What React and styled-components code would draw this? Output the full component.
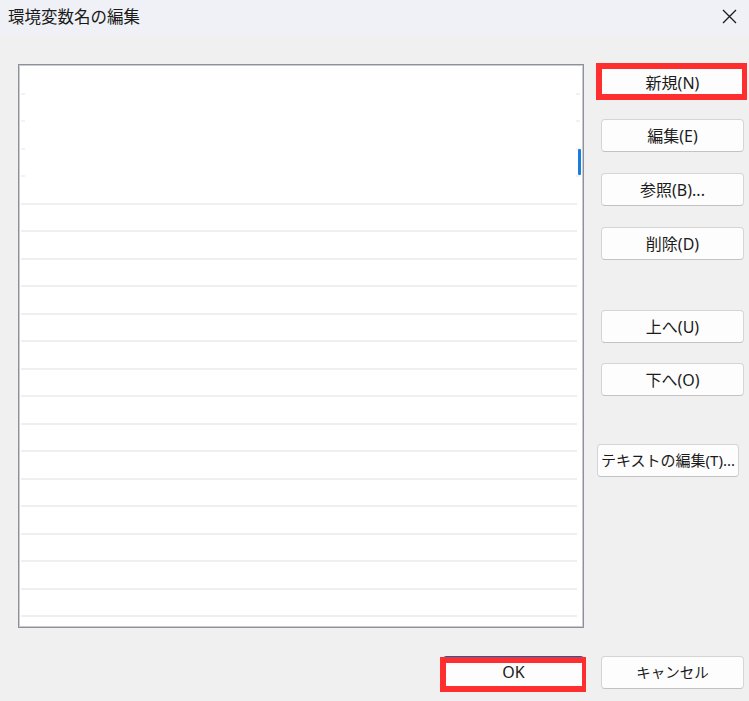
import React from "react";
import styled, { createGlobalStyle } from "styled-components";

const GlobalStyle = createGlobalStyle`
  html, body {
    margin: 0;
    padding: 0;
    background: #f0f0f0;
  }
  body {
    font-family: "Noto Sans", "Noto Sans CJK JP", sans-serif;
    color: #1b1b1b;
  }
`;

const Window = styled.div`
  width: 749px;
  height: 701px;
  display: flex;
  flex-direction: column;
  background: #f0f0f0;
  overflow: hidden;
`;

const TitleBar = styled.div`
  height: 35px;
  flex-shrink: 0;
  display: flex;
  align-items: center;
  justify-content: space-between;
  padding: 0 12px 4px 8px;
  box-sizing: border-box;
  background: #eff1f6;
  font-size: 16.5px;
  color: #1a1a1a;
`;

const CloseButton = styled.div`
  width: 16px;
  height: 16px;
  display: flex;
  align-items: center;
  justify-content: center;
  margin-top: 2px;
`;

const Main = styled.div`
  display: flex;
  gap: 17px;
  padding: 29px 0 0 18px;
`;

const ListBox = styled.div`
  position: relative;
  width: 566px;
  height: 564px;
  box-sizing: border-box;
  border: 1px solid #8d9199;
  box-shadow: inset 0 0 0 1px #c9cbd0;
  background: #ffffff;
  padding: 2px 2px 0 2px;
`;

const Row = styled.div`
  height: 27.5px;
  box-sizing: border-box;
  background-image: ${(p) =>
    p.$faint
      ? "linear-gradient(#f2f2f2, #f2f2f2), linear-gradient(#f2f2f2, #f2f2f2)"
      : "linear-gradient(#efefef, #efefef)"};
  background-repeat: no-repeat;
  background-size: ${(p) => (p.$faint ? "4px 2px, 4px 2px" : "calc(100% - 4px) 2px")};
  background-position: ${(p) =>
    p.$faint ? "left bottom, right 1px bottom" : "left bottom"};
`;

const ScrollThumb = styled.div`
  position: absolute;
  right: 2px;
  top: 84px;
  width: 3px;
  height: 26px;
  border-radius: 1px;
  background: #1a7be0;
`;

const ButtonColumn = styled.div`
  display: flex;
  flex-direction: column;
  padding-top: 2px;
`;

const Button = styled.button`
  position: relative;
  width: ${(p) => p.$width || 143}px;
  height: 33px;
  box-sizing: border-box;
  margin-top: ${(p) => p.$gap || 0}px;
  margin-left: ${(p) => p.$shift || 0}px;
  padding: 0 0 2px;
  border: 1px solid ${(p) => (p.$default ? "#0067c0" : "#d5d5d5")};
  border-bottom-color: ${(p) => (p.$default ? "#0067c0" : "#c2c2c2")};
  border-radius: 4px;
  background: #fdfdfd;
  font-family: "Noto Sans", "Noto Sans CJK JP", sans-serif;
  font-size: ${(p) => p.$size || 16}px;
  color: #1b1b1b;
  white-space: nowrap;
  cursor: default;

  ${(p) =>
    p.$mark &&
    `
    &::after {
      content: "";
      position: absolute;
      top: ${p.$mark.top}px;
      left: ${p.$mark.left}px;
      right: ${p.$mark.right}px;
      bottom: ${p.$mark.bottom}px;
      border-style: solid;
      border-color: #ff2f2f;
      border-width: ${p.$mark.width};
      pointer-events: none;
    }
  `}
`;

const Footer = styled.div`
  display: flex;
  justify-content: flex-end;
  gap: 16px;
  padding: 28px 5px 0 0;
`;

const rows = Array.from({ length: 20 }, (_, i) => i);

export default function App() {
  return (
    <Window>
      <GlobalStyle />
      <TitleBar>
        <span>環境変数名の編集</span>
        <CloseButton>
          <svg width="15" height="15" viewBox="0 0 15 15">
            <path
              d="M1 1 L14 14 M14 1 L1 14"
              stroke="#1a1a1a"
              strokeWidth="1.3"
              fill="none"
            />
          </svg>
        </CloseButton>
      </TitleBar>

      <Main>
        <ListBox>
          {rows.map((i) => (
            <Row key={i} $faint={i < 4} />
          ))}
          <ScrollThumb />
        </ListBox>

        <ButtonColumn>
          <Button
            $mark={{ top: -4, left: -6, right: -4, bottom: -2, width: "6px 5px 6px 6px" }}
          >
            新規(N)
          </Button>
          <Button $gap={20}>編集(E)</Button>
          <Button $gap={21}>参照(B)...</Button>
          <Button $gap={21}>削除(D)</Button>
          <Button $gap={50}>上へ(U)</Button>
          <Button $gap={20}>下へ(O)</Button>
          <Button $gap={48} $shift={-4} $width={142} $size={15}>
            テキストの編集(T)...
          </Button>
        </ButtonColumn>
      </Main>

      <Footer>
        <Button
          $default
          $mark={{ top: 0, left: -3, right: -2, bottom: -4, width: "6px 4px 6px 6px" }}
        >
          OK
        </Button>
        <Button $size={14.5}>キャンセル</Button>
      </Footer>
    </Window>
  );
}
